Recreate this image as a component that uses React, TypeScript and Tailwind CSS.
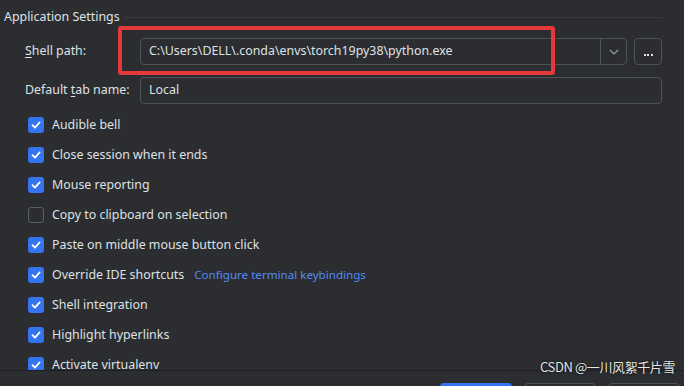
const FONT = '"Noto Sans", "Open Sans", sans-serif';

const checks: { label: string; on: boolean; link?: string }[] = [
  { label: 'Audible bell', on: true },
  { label: 'Close session when it ends', on: true },
  { label: 'Mouse reporting', on: true },
  { label: 'Copy to clipboard on selection', on: false },
  { label: 'Paste on middle mouse button click', on: true },
  { label: 'Override IDE shortcuts', on: true, link: 'Configure terminal keybindings' },
  { label: 'Shell integration', on: true },
  { label: 'Highlight hyperlinks', on: true },
  { label: 'Activate virtualenv', on: true },
];

function Check({ on }: { on: boolean }) {
  if (!on) {
    return <span className="h-4 w-4 shrink-0 rounded-[3px] border border-[#5a5d63] bg-[#2b2d30]" />;
  }
  return (
    <span className="flex h-4 w-4 shrink-0 items-center justify-center rounded-[3px] bg-[#3574f0]">
      <svg width="12" height="12" viewBox="0 0 12 12" fill="none">
        <path d="M2.5 6.2 L5 8.6 L9.6 3.4" stroke="#fff" strokeWidth="1.8" strokeLinecap="round" strokeLinejoin="round" />
      </svg>
    </span>
  );
}

export default function App() {
  return (
    <div
      className="relative flex h-[386px] w-[684px] flex-col overflow-hidden bg-[#2b2d30] text-[12.4px] text-[#dfe1e5]"
      style={{ fontFamily: FONT }}
    >
      <div className="h-[370px] shrink-0 overflow-hidden">
        {/* section header */}
        <div className="flex h-[34px] items-center pl-[4px] pr-[21px]">
          <span className="whitespace-nowrap">Application Settings</span>
          <span className="ml-[5px] h-px flex-1 bg-[#393b40]" />
        </div>

        {/* shell path */}
        <div className="mt-[4px] flex h-[27px] items-center pl-[25px]">
          <span className="w-[115px] shrink-0">
            <span className="underline underline-offset-2">S</span>hell path:
          </span>
          <div className="flex h-[27px] w-[487px] items-center rounded-[4px] border border-[#4e5157]">
            <span className="flex-1 pl-[8px] whitespace-nowrap">C:\Users\DELL\.conda\envs\torch19py38\python.exe</span>
            <span className="flex h-full w-[26px] items-center justify-center border-l border-[#4e5157]">
              <svg width="10" height="6" viewBox="0 0 10 6" fill="none">
                <path d="M1 1 L5 5 L9 1" stroke="#9da0a8" strokeWidth="1.1" />
              </svg>
            </span>
          </div>
          <div className="ml-[7px] flex h-[27px] w-[28px] items-end justify-center rounded-[4px] border border-[#4e5157] pb-[8px]">
            <span className="flex gap-[1.5px]">
              <span className="h-[2px] w-[2px] bg-[#dfe1e5]" />
              <span className="h-[2px] w-[2px] bg-[#dfe1e5]" />
              <span className="h-[2px] w-[2px] bg-[#dfe1e5]" />
            </span>
          </div>
        </div>

        {/* default tab name */}
        <div className="mt-[12px] flex h-[27px] items-center pl-[25px]">
          <span className="w-[115px] shrink-0">
            Default <span className="underline underline-offset-2">t</span>ab name:
          </span>
          <div className="flex h-[27px] w-[522px] items-center rounded-[4px] border border-[#4e5157] pl-[8px]">
            Local
          </div>
        </div>

        {/* checkboxes */}
        <div className="mt-[6px] flex flex-col pl-[28px]">
          {checks.map((c) => (
            <div key={c.label} className="flex h-[30px] items-center gap-[8px]">
              <Check on={c.on} />
              <span className="whitespace-nowrap">{c.label}</span>
              {c.link && <span className="ml-[2px] text-[11.6px] text-[#548af7]">{c.link}</span>}
            </div>
          ))}
        </div>
      </div>

      {/* footer */}
      <div className="flex h-[16px] shrink-0 items-start justify-end gap-[12px] overflow-hidden border-t border-[#1e1f22] pr-[4px] pt-[12px]">
        <span className="h-[24px] w-[72px] shrink-0 rounded-[4px] bg-[#3574f0]" />
        <span className="h-[24px] w-[72px] shrink-0 rounded-[4px] border border-[#4e5157]" />
        <span className="h-[24px] w-[72px] shrink-0 rounded-[4px] border border-[#4e5157]" />
      </div>

      {/* annotation */}
      <div className="absolute left-[118px] top-[26px] h-[49px] w-[437px] rounded-[3px] border-[4px] border-[#e5393b]" />

      {/* watermark */}
      <div
        className="absolute left-[540px] top-[357px] whitespace-nowrap text-[13px] tracking-[-0.4px] text-[#e6e6e6]"
        style={{ fontFamily: '"Noto Sans CJK SC", sans-serif', textShadow: '0 0 2px #000' }}
      >
        CSDN @一川风絮千片雪
      </div>
    </div>
  );
}
